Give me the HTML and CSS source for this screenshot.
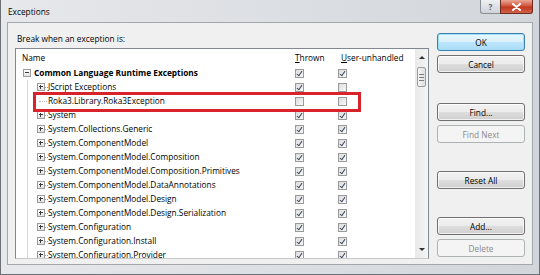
FILE: index.html
```html
<!DOCTYPE html>
<html lang="en">
<head>
  <meta charset="UTF-8">
  <title>Exceptions</title>
  <link rel="stylesheet" href="styles.css">
</head>
<body>
  <div class="window">
    <div class="titlebar">
      <span class="title">Exceptions</span>
      <div class="caption">
        <span class="cap help">?</span>
        <span class="cap close">
          <svg width="11" height="8" viewBox="0 0 11 8"><path d="M2 1l7 6M9 1L2 7" stroke="#fff" stroke-width="2" stroke-linecap="round"/></svg>
        </span>
      </div>
    </div>

    <div class="client">
      <div class="main">
        <div class="prompt">Break when an exception is:</div>
        <div class="list">
          <div class="list-body">
            <div class="row header">
              <div class="name">Name</div>
              <div><u>T</u>hrown</div>
              <div class="uu"><u>U</u>ser-unhandled</div>
            </div>

            <div class="row">
              <div class="name root"><span class="exp open"></span><b>Common Language Runtime Exceptions</b></div>
              <div><span class="cb on"></span></div>
              <div><span class="cb on"></span></div>
            </div>

            <div class="children">
              <div class="row">
                <div class="name"><span class="exp"></span><span class="dash"></span>JScript Exceptions</div>
                <div><span class="cb on"></span></div>
                <div><span class="cb"></span></div>
              </div>
              <div class="row">
                <div class="name leaf"><span class="dash long"></span>Roka3.Library.Roka3Exception</div>
                <div><span class="cb"></span></div>
                <div><span class="cb"></span></div>
              </div>
              <div class="row">
                <div class="name"><span class="exp"></span><span class="dash"></span>System</div>
                <div><span class="cb on"></span></div>
                <div><span class="cb on"></span></div>
              </div>
              <div class="row">
                <div class="name"><span class="exp"></span><span class="dash"></span>System.Collections.Generic</div>
                <div><span class="cb on"></span></div>
                <div><span class="cb on"></span></div>
              </div>
              <div class="row">
                <div class="name"><span class="exp"></span><span class="dash"></span>System.ComponentModel</div>
                <div><span class="cb on"></span></div>
                <div><span class="cb on"></span></div>
              </div>
              <div class="row">
                <div class="name"><span class="exp"></span><span class="dash"></span>System.ComponentModel.Composition</div>
                <div><span class="cb on"></span></div>
                <div><span class="cb on"></span></div>
              </div>
              <div class="row">
                <div class="name"><span class="exp"></span><span class="dash"></span>System.ComponentModel.Composition.Primitives</div>
                <div><span class="cb on"></span></div>
                <div><span class="cb on"></span></div>
              </div>
              <div class="row">
                <div class="name"><span class="exp"></span><span class="dash"></span>System.ComponentModel.DataAnnotations</div>
                <div><span class="cb on"></span></div>
                <div><span class="cb on"></span></div>
              </div>
              <div class="row">
                <div class="name"><span class="exp"></span><span class="dash"></span>System.ComponentModel.Design</div>
                <div><span class="cb on"></span></div>
                <div><span class="cb on"></span></div>
              </div>
              <div class="row">
                <div class="name"><span class="exp"></span><span class="dash"></span>System.ComponentModel.Design.Serialization</div>
                <div><span class="cb on"></span></div>
                <div><span class="cb on"></span></div>
              </div>
              <div class="row">
                <div class="name"><span class="exp"></span><span class="dash"></span>System.Configuration</div>
                <div><span class="cb on"></span></div>
                <div><span class="cb on"></span></div>
              </div>
              <div class="row">
                <div class="name"><span class="exp"></span><span class="dash"></span>System.Configuration.Install</div>
                <div><span class="cb on"></span></div>
                <div><span class="cb on"></span></div>
              </div>
              <div class="row">
                <div class="name"><span class="exp"></span><span class="dash"></span>System.Configuration.Provider</div>
                <div><span class="cb on"></span></div>
                <div><span class="cb on"></span></div>
              </div>
            </div>
          </div>

          <div class="scrollbar">
            <div class="sb-btn"><span class="arrow up"></span></div>
            <div class="sb-thumb"></div>
            <div class="sb-btn down"><span class="arrow dn"></span></div>
          </div>

          <!-- annotation drawn over the Roka3 row -->
          <div class="highlight"></div>
        </div>
      </div>

      <div class="actions">
        <button class="btn default">OK</button>
        <button class="btn">Cancel</button>
        <button class="btn group">Find...</button>
        <button class="btn" disabled>Find Next</button>
        <button class="btn section">Reset All</button>
        <button class="btn section">Add...</button>
        <button class="btn" disabled>Delete</button>
      </div>
    </div>
  </div>
</body>
</html>
```

FILE: styles.css
```css
body {
  margin: 0;
  font-family: "Open Sans", "Noto Sans", sans-serif;
  font-size: 8.3px;
  color: #000;
  background: #fff;
}
.window {
  width: 540px;
  height: 275px;
  box-sizing: border-box;
  display: flex;
  flex-direction: column;
  padding: 0 6px 9px;
  border: 1px solid #6b7077;
  border-top: none;
  background: linear-gradient(to right, #e6e8eb, #d2d6db);
}
.titlebar {
  height: 22px;
  display: flex;
  align-items: flex-start;
}
.title {
  line-height: 24px;
  padding-left: 1px;
}
.caption {
  margin-left: auto;
  display: flex;
}
.cap {
  height: 14px;
  box-sizing: border-box;
  display: flex;
  align-items: center;
  justify-content: center;
}
.help {
  width: 20px;
  border: 1px solid #8a8f96;
  border-top: none;
  border-right: none;
  border-radius: 0 0 0 3px;
  background: linear-gradient(#eef0f2, #cfd3d8);
  color: #5a5f66;
  font-size: 8px;
  font-weight: bold;
}
.close {
  width: 33px;
  border: 1px solid #6d2a20;
  border-top: none;
  border-radius: 0 0 3px 0;
  background: linear-gradient(#e9a896, #d0553e 45%, #c1391f 55%, #d2624a);
}
.client {
  flex: 1;
  display: flex;
  gap: 8px;
  padding: 10px 7px 0;
  border: 1px solid #a3a8ae;
  background: #f0f0f0;
}
.main {
  width: 414px;
}
.prompt {
  line-height: 12px;
  padding-left: 2px;
  margin-bottom: 3px;
}
.list {
  position: relative;
  height: 211px;
  box-sizing: border-box;
  display: flex;
  border: 1px solid #828790;
  border-bottom-color: #c9c9c9;
  background: #fff;
  overflow: hidden;
}
.list-body {
  flex: 1;
  overflow: hidden;
}
.row {
  display: grid;
  grid-template-columns: 279px 43px 1fr;
  align-items: center;
  height: 14px;
  line-height: 14px;
  white-space: nowrap;
}
.row.header {
  height: 17px;
  line-height: 17px;
}
.header .name {
  padding-left: 6px;
}
.header .uu {
  padding-left: 3px;
}
.name {
  display: flex;
  align-items: center;
  padding-left: 21px;
}
.name.root {
  padding-left: 7px;
}
.name.leaf {
  padding-left: 23px;
}
.root b {
  margin-left: 3px;
}
.children {
  background: linear-gradient(#d6d6d6, #d6d6d6) no-repeat 11px 0 / 1px 100%;
}
.exp {
  position: relative;
  width: 8px;
  height: 8px;
  box-sizing: border-box;
  border: 1px solid #9b9b9b;
  background: linear-gradient(#fdfdfd, #e4e4e4);
}
.exp::before,
.exp::after {
  content: "";
  position: absolute;
  background: #3b3b3b;
}
.exp::before {
  left: 1px;
  top: 2px;
  width: 4px;
  height: 1px;
}
.exp::after {
  left: 2px;
  top: 1px;
  width: 1px;
  height: 4px;
}
.exp.open::after {
  display: none;
}
.dash {
  width: 3px;
  border-top: 1px dotted #9a9a9a;
}
.dash.long {
  width: 8px;
  margin-right: 1px;
  border-top-color: #b4b4b4;
}
.cb {
  position: relative;
  display: block;
  width: 9px;
  height: 9px;
  box-sizing: border-box;
  border: 1px solid #9a9a9a;
  background: linear-gradient(135deg, #dcdcdc, #fafafa);
}
.cb.on::after {
  content: "";
  position: absolute;
  left: 2px;
  top: 0;
  width: 2px;
  height: 5px;
  border: solid #3e4c5e;
  border-width: 0 1px 1px 0;
  transform: rotate(35deg);
}
.scrollbar {
  width: 13px;
  display: flex;
  flex-direction: column;
  background: linear-gradient(to right, #e9e9e9, #f5f5f5);
}
.sb-btn {
  height: 17px;
  display: flex;
  align-items: center;
  justify-content: center;
}
.sb-btn.down {
  margin-top: auto;
}
.arrow {
  width: 0;
  height: 0;
  border-left: 3px solid transparent;
  border-right: 3px solid transparent;
}
.arrow.up {
  border-bottom: 3px solid #333;
}
.arrow.dn {
  border-top: 3px solid #333;
}
.sb-thumb {
  height: 18px;
  margin: 1px 2px 0;
  border: 1px solid #9c9c9c;
  border-radius: 2px;
  background:
    repeating-linear-gradient(#7c7c7c 0 1px, transparent 1px 3px) no-repeat center / 5px 7px,
    linear-gradient(to right, #f7f7f7, #dedede);
}
.highlight {
  position: absolute;
  left: 17px;
  top: 43px;
  width: 328px;
  height: 20px;
  box-sizing: border-box;
  border: 3px solid #d8232a;
}
.actions {
  width: 88px;
  display: flex;
  flex-direction: column;
}
.btn {
  height: 18px;
  margin-top: 4px;
  padding: 0;
  font-family: inherit;
  font-size: 8.3px;
  color: #000;
  border: 1px solid #707070;
  border-radius: 3px;
  background: linear-gradient(#f2f2f2, #ebebeb 50%, #dddddd 51%, #cfcfcf);
  box-shadow: inset 0 0 0 1px rgba(255, 255, 255, 0.7);
}
.btn:first-child {
  margin-top: 0;
}
.btn.group {
  margin-top: 30px;
}
.btn.section {
  margin-top: 28px;
}
.btn.default {
  border-color: #3c7fb1;
  background: linear-gradient(#e9f7fd, #d8f0fc 50%, #bde6fc 51%, #a9dbf6);
  box-shadow: inset 0 0 0 1px #9fe0f7;
}
.btn:disabled {
  color: #8a8a8a;
  border-color: #adb2b5;
  background: #f4f4f4;
  box-shadow: none;
}
```
